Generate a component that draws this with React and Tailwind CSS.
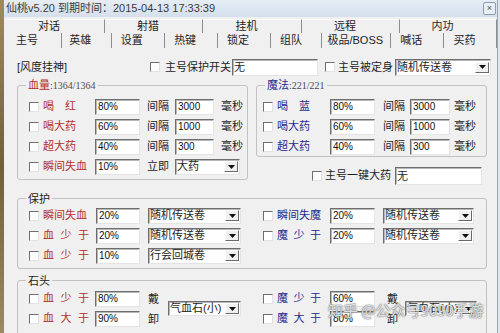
import React from 'react';

const RED = 'text-[#b3302c]';
const BLUE = 'text-[#1f2a8c]';

function Check({ className = '' }) {
  return (
    <span className={`w-[10px] h-[10px] shrink-0 bg-white border border-t-[#6f6f6f] border-l-[#6f6f6f] border-r-[#e2e2e2] border-b-[#e2e2e2] ${className}`} />
  );
}

function Box({ className = '', children }) {
  return (
    <div className={`bg-white border border-t-[#6e6e6e] border-l-[#6e6e6e] border-r-[#e4e4e4] border-b-[#e4e4e4] shadow-[inset_1px_1px_0_#b8b8b8] ${className}`}>
      {children}
    </div>
  );
}

function Num({ className = '', v }) {
  return (
    <Box className={`h-[16px] ${className}`}>
      <span className="block pl-[2px] pt-[1px] text-[10px] leading-[11px] font-['Liberation_Sans',sans-serif] text-[#111]">{v}</span>
    </Box>
  );
}

function Drop({ className = '', v }) {
  return (
    <Box className={`flex items-center justify-between ${className}`}>
      <span className="pl-[1px] text-[11px] leading-[13px] whitespace-nowrap">{v}</span>
      <span className="mr-[1px] w-[14px] h-[11px] flex items-center justify-center bg-[#f0f0f0] border border-t-white border-l-white border-r-[#6a6a6a] border-b-[#6a6a6a]">
        <svg width="7" height="4" viewBox="0 0 7 4">
          <path d="M0 0h7L3.5 4z" fill="#111" />
        </svg>
      </span>
    </Box>
  );
}

// label whose characters are spread across a fixed width
function Spaced({ text, className = '' }) {
  return (
    <span className={`flex justify-between ${className}`}>
      {text.split(' ').map((c, i) => (
        <span key={i}>{c}</span>
      ))}
    </span>
  );
}

function Group({ legend, className = '', children }) {
  return (
    <fieldset className={`border border-[#c2c2c2] rounded-[3px] ${className}`}>
      <legend className="ml-[8px] px-[2px] leading-[14px]">{legend}</legend>
      {children}
    </fieldset>
  );
}

const hpRows = [
  { label: '喝 红', w: 'w-[33px]', pct: '80%', ms: '3000' },
  { label: '喝大药', w: 'w-[33px]', pct: '60%', ms: '1000' },
  { label: '超大药', w: 'w-[33px]', pct: '40%', ms: '300' },
];

const mpRows = [
  { label: '喝 蓝', pct: '80%', ms: '3000' },
  { label: '喝大药', pct: '60%', ms: '1000' },
  { label: '超大药', pct: '40%', ms: '300' },
];

const row1Tabs = [
  { t: '对话', w: 'w-[100px]' },
  { t: '射猎', w: 'w-[98px]' },
  { t: '挂机', w: 'w-[99px]' },
  { t: '远程', w: 'w-[98px]' },
  { t: '内功', w: 'w-[97px]' },
];

const row2Tabs = [
  { t: '主号', w: 'w-[57px]', p: 'pr-[12px]' },
  { t: '英雄', w: 'w-[50px]', p: 'pr-[12px]' },
  { t: '设置', w: 'w-[53px]', p: 'pr-[12px]' },
  { t: '热键', w: 'w-[53px]', p: 'pr-[11px]' },
  { t: '锁定', w: 'w-[54px]', p: 'pr-[12px]' },
  { t: '组队', w: 'w-[51px]', p: 'pr-[11px]' },
  { t: '极品/BOSS', w: 'w-[69px]', p: 'pr-[2px]' },
  { t: '喊话', w: 'w-[53px]', p: 'pr-[12px]' },
  { t: '买药', w: 'w-[53px]', p: 'pr-[11px]' },
];

export default function App() {
  return (
    <div className="relative w-[500px] h-[333px] overflow-hidden flex bg-[#f0f0f0] text-[11px] text-[#1e1e1e] font-['Liberation_Sans','Noto_Sans_CJK_SC',sans-serif]">
      <div className="w-[4px] shrink-0 bg-linear-to-b from-[#a08c5a] via-[#6f5f3d] to-[#9b8a63]" />

      <div className="w-[493px] shrink-0 flex flex-col">
        {/* title bar */}
        <div className="h-[19px] flex items-center justify-between pl-[2px] pr-[1px] bg-linear-to-b from-[#e6edf5] to-[#d5e0ec] text-[#3b3b3b]">
          <span className="whitespace-nowrap">仙桃v5.20 到期时间：2015-04-13 17:33:39</span>
          <span className="w-[13px] h-[13px] flex items-center justify-center border border-[#8e9bab] rounded-[2px] bg-[#e8eef5] text-[9px] leading-none text-[#555]">×</span>
        </div>

        {/* tabs */}
        <div className="mt-[2px] h-[14px] flex pl-[1px]">
          {row1Tabs.map((tab) => (
            <div key={tab.t} className={`${tab.w} flex items-center justify-center pr-[11px] border-r border-[#8d8d8d] border-t border-t-[#fbfbfb]`}>
              {tab.t}
            </div>
          ))}
        </div>
        <div className="h-[15px] flex pl-[1px]">
          {row2Tabs.map((tab) => (
            <div key={tab.t} className={`${tab.w} ${tab.p} flex items-center justify-center border-r border-[#8d8d8d]`}>
              {tab.t}
            </div>
          ))}
        </div>

        {/* body */}
        <div className="flex-1 flex flex-col pl-[13px] pt-[11px]">
          <div className="h-[17px] flex items-center">
            <span className="w-[133px]">[风度挂神]</span>
            <Check />
            <span className="ml-[5px] w-[67px]">主号保护开关</span>
            <Box className="w-[86px] h-[17px] pl-[1px] leading-[15px]">无</Box>
            <Check className="ml-[7px]" />
            <span className="ml-[3px] w-[57px]">主号被定身</span>
            <Drop className="w-[96px] h-[17px]" v="随机传送卷" />
          </div>

          <div className="mt-[2px] flex">
            <Group
              className="w-[231px] h-[102px]"
              legend={
                <>
                  <span className={RED}>血量</span>
                  <span className="text-[10px] font-['Liberation_Serif',serif] text-[#5a4a4a]">:1364/1364</span>
                </>
              }
            >
              <div className="pt-[4px] pl-[11px]">
                {hpRows.map((r) => (
                  <div key={r.label} className="h-[20px] flex items-center">
                    <Check />
                    <span className="ml-[4px] w-[52px]">
                      <Spaced text={r.label} className={`${r.w} ${RED}`} />
                    </span>
                    <Num className="w-[45px]" v={r.pct} />
                    <span className="ml-[7px] w-[28px]">间隔</span>
                    <Num className="w-[39px]" v={r.ms} />
                    <span className="ml-[7px]">毫秒</span>
                  </div>
                ))}
                <div className="h-[20px] flex items-center">
                  <Check />
                  <span className={`ml-[4px] w-[52px] ${RED}`}>瞬间失血</span>
                  <Num className="w-[45px]" v="10%" />
                  <span className="ml-[7px] w-[28px]">立即</span>
                  <Drop className="w-[65px] h-[16px]" v="大药" />
                </div>
              </div>
            </Group>

            <div className="ml-[8px] w-[231px] flex flex-col">
              <Group
                className="w-full h-[79px]"
                legend={
                  <>
                    <span className={BLUE}>魔法</span>
                    <span className="text-[10px] font-['Liberation_Serif',serif] text-[#4a4a5a]">:221/221</span>
                  </>
                }
              >
                <div className="pt-[4px] pl-[6px]">
                  {mpRows.map((r) => (
                    <div key={r.label} className="h-[20px] flex items-center">
                      <Check />
                      <span className="ml-[4px] w-[53px]">
                        <Spaced text={r.label} className={`w-[33px] ${BLUE}`} />
                      </span>
                      <Num className="w-[45px]" v={r.pct} />
                      <span className="ml-[8px] w-[27px]">间隔</span>
                      <Num className="w-[40px]" v={r.ms} />
                      <span className="ml-[4px]">毫秒</span>
                    </div>
                  ))}
                </div>
              </Group>
              <div className="mt-[10px] h-[18px] flex items-center pl-[56px]">
                <Check />
                <span className="ml-[3px] w-[70px]">主号一键大药</span>
                <Box className="w-[87px] h-[18px] pl-[1px] leading-[16px]">无</Box>
              </div>
            </div>
          </div>

          <Group className="mt-[7px] w-[470px] h-[77px]" legend="保护">
            <div className="flex">
              <div className="w-[238px] pl-[11px] flex flex-col">
                {[
                  { l: '瞬间失血', s: false, p: '20%', d: '随机传送卷' },
                  { l: '血 少 于', s: true, p: '20%', d: '随机传送卷' },
                  { l: '血 少 于', s: true, p: '10%', d: '行会回城卷' },
                ].map((r, i) => (
                  <div key={i} className="h-[20px] flex items-center">
                    <Check />
                    <span className="ml-[4px] w-[53px]">
                      {r.s ? <Spaced text={r.l} className={`w-[46px] ${RED}`} /> : <span className={RED}>{r.l}</span>}
                    </span>
                    <Num className="w-[44px]" v={r.p} />
                    <Drop className="ml-[8px] w-[93px] h-[16px]" v={r.d} />
                  </div>
                ))}
              </div>
              <div className="pl-[7px] flex flex-col">
                {[
                  { l: '瞬间失魔', s: false, p: '20%' },
                  { l: '魔 少 于', s: true, p: '20%' },
                ].map((r, i) => (
                  <div key={i} className="h-[20px] flex items-center">
                    <Check />
                    <span className="ml-[4px] w-[53px]">
                      {r.s ? <Spaced text={r.l} className={`w-[44px] ${BLUE}`} /> : <span className={BLUE}>{r.l}</span>}
                    </span>
                    <Num className="w-[45px]" v={r.p} />
                    <Drop className="ml-[8px] w-[91px] h-[16px]" v="随机传送卷" />
                  </div>
                ))}
              </div>
            </div>
          </Group>

          <Group className="mt-[5px] w-[470px] h-[64px] shrink-0" legend="石头">
            <div className="pt-[1px] flex">
              <div className="w-[238px] pl-[11px] flex items-center">
                <div className="flex flex-col">
                  {[
                    { l: '血 少 于', p: '80%' },
                    { l: '血 大 于', p: '90%' },
                  ].map((r) => (
                    <div key={r.l} className="h-[20px] flex items-center">
                      <Check />
                      <span className="ml-[4px] w-[52px]">
                        <Spaced text={r.l} className={`w-[46px] ${RED}`} />
                      </span>
                      <Num className="w-[45px]" v={r.p} />
                    </div>
                  ))}
                </div>
                <div className="ml-[8px] flex flex-col">
                  <span className="h-[20px] leading-[20px]">戴</span>
                  <span className="h-[20px] leading-[20px]">卸</span>
                </div>
                <Drop className="ml-[9px] w-[73px] h-[15px]" v="气血石(小)" />
              </div>
              <div className="pl-[7px] flex items-center">
                <div className="flex flex-col">
                  {[
                    { l: '魔 少 于', p: '60%' },
                    { l: '魔 大 于', p: '80%' },
                  ].map((r) => (
                    <div key={r.l} className="h-[20px] flex items-center">
                      <Check />
                      <span className="ml-[4px] w-[53px]">
                        <Spaced text={r.l} className={`w-[44px] ${BLUE}`} />
                      </span>
                      <Num className="w-[45px]" v={r.p} />
                    </div>
                  ))}
                </div>
                <div className="ml-[12px] flex flex-col">
                  <span className="h-[20px] leading-[20px]">戴</span>
                  <span className="h-[20px] leading-[20px]">卸</span>
                </div>
                <Drop className="ml-[7px] w-[72px] h-[15px]" v="气血石(小)" />
              </div>
            </div>
          </Group>
        </div>
      </div>

      <div className="w-[3px] shrink-0 bg-[#dfe6ee] border-l border-[#9aa6b2]" />

      {/* watermark over the bottom right */}
      <span className="absolute left-[328px] top-[301px] text-[15px] leading-[18px] whitespace-nowrap text-white/80 [text-shadow:0_0_1px_#555,0_0_2px_#777] font-['Noto_Sans_CJK_SC',sans-serif]">
        知乎 @公众号9090手游
      </span>
    </div>
  );
}
